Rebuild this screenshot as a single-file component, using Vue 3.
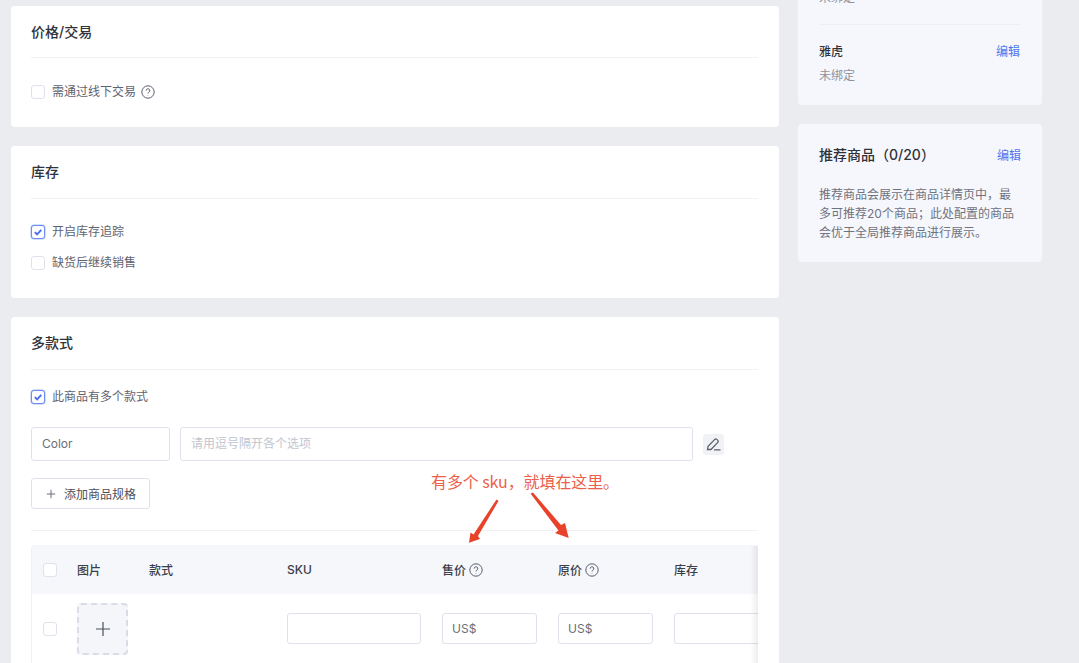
<script setup>
const columns = [
  { label: '图片' },
  { label: '款式' },
  { label: 'SKU' },
  { label: '售价', help: true },
  { label: '原价', help: true },
  { label: '库存' },
]
</script>

<template>
  <div class="page">
    <div class="main">
      <section class="card card-price">
        <h2 class="card-title">价格/交易</h2>
        <div class="card-body">
          <label class="check">
            <span class="box"></span>需通过线下交易
            <svg class="help" viewBox="0 0 14 14"><circle cx="7" cy="7" r="6.2" /><path d="M5.2 5.6a1.8 1.8 0 1 1 2.7 1.5c-.6.4-.9.7-.9 1.4M7 10v.4" /></svg>
          </label>
        </div>
      </section>

      <section class="card card-stock">
        <h2 class="card-title">库存</h2>
        <div class="card-body stack">
          <label class="check">
            <span class="box on"><svg viewBox="0 0 12 12"><path d="M2.800 6.100l2.300 2.200 4.200-4.500" /></svg></span>开启库存追踪
          </label>
          <label class="check"><span class="box"></span>缺货后继续销售</label>
        </div>
      </section>

      <section class="card card-variant">
        <h2 class="card-title">多款式</h2>
        <div class="variant-body">
          <label class="check">
            <span class="box on"><svg viewBox="0 0 12 12"><path d="M2.800 6.100l2.300 2.200 4.200-4.500" /></svg></span>此商品有多个款式
          </label>

          <div class="option-row">
            <div class="input option-name">Color</div>
            <div class="input option-values">请用逗号隔开各个选项</div>
            <span class="edit-btn">
              <svg viewBox="0 0 21 21"><path d="M4.500 15.500l.6-3.300 6.700-6.800a1.400 1.400 0 0 1 2 0l1 1a1.400 1.400 0 0 1 0 2l-6.800 7.100zM11 15.800h6.500" /></svg>
            </span>
          </div>

          <button class="add-btn">
            <svg viewBox="0 0 12 12"><path d="M6 1v10M1 6h10" /></svg>添加商品规格
          </button>

          <div class="table">
            <div class="t-row t-head">
              <div class="t-cell"><span class="box"></span></div>
              <div v-for="col in columns" :key="col.label" class="t-cell">
                {{ col.label }}
                <svg v-if="col.help" class="help" viewBox="0 0 14 14"><circle cx="7" cy="7" r="6.2" /><path d="M5.2 5.6a1.8 1.8 0 1 1 2.700 1.500c-.6.4-.9.7-.9 1.400M7 10v.4" /></svg>
              </div>
            </div>
            <div class="t-row t-line">
              <div class="t-cell"><span class="box"></span></div>
              <div class="t-cell">
                <span class="upload"><svg viewBox="0 0 16 16"><path d="M8 1v14M1 8h14" /></svg></span>
              </div>
              <div class="t-cell"></div>
              <div class="t-cell"><div class="input cell-input w-sku"></div></div>
              <div class="t-cell"><div class="input cell-input w-price">US$</div></div>
              <div class="t-cell"><div class="input cell-input w-price">US$</div></div>
              <div class="t-cell"><div class="input cell-input w-stock"></div></div>
            </div>
            <div class="table-shadow"></div>
          </div>
        </div>
      </section>
    </div>

    <aside class="side">
      <section class="side-card side-bind">
        <div class="bind-item first">
          <div class="bind-head"><span>谷歌</span><a>编辑</a></div>
          <div class="bind-state">未绑定</div>
        </div>
        <div class="bind-item">
          <div class="bind-head"><span>雅虎</span><a>编辑</a></div>
          <div class="bind-state">未绑定</div>
        </div>
      </section>

      <section class="side-card side-rec">
        <div class="rec-head"><span>推荐商品（0/20）</span><a>编辑</a></div>
        <p class="rec-text">推荐商品会展示在商品详情页中，最多可推荐20个商品；此处配置的商品会优于全局推荐商品进行展示。</p>
      </section>
    </aside>

    <div class="note">有多个 sku，就填在这里。</div>
    <svg class="note-arrows" viewBox="0 0 1079 663">
      <path d="M496.500 499.500L498.500 501L478 536L480 539L469 542.800L470.500 532.500L473.500 534.500Z" />
      <path d="M530.500 493.500L533 492.500L561 525L565 523L568.700 538L555 533L558.500 530.500Z" />
    </svg>
  </div>
</template>

<style>
html, body {
  margin: 0;
  background: #ebecf0;
}
</style>

<style scoped>
.page {
  position: relative;
  display: flex;
  gap: 19px;
  width: 1079px;
  height: 663px;
  box-sizing: border-box;
  padding: 6px 0 0 11px;
  overflow: hidden;
  background: #ebecf0;
  font-family: Inter, "Noto Sans CJK SC", sans-serif;
  font-size: 12px;
  color: #3b3f4a;
}

.main {
  display: flex;
  flex-direction: column;
  gap: 19px;
  width: 768px;
  flex: none;
}

.card {
  box-sizing: border-box;
  padding: 0 21px 0 20px;
  background: #fff;
  border-radius: 4px;
  flex: none;
}

.card-price { height: 121px; }
.card-stock { height: 152px; }
.card-variant { height: 400px; }

.card-title {
  margin: 0;
  height: 51px;
  line-height: 52px;
  border-bottom: 1px solid #f0f1f4;
  font-size: 14px;
  font-weight: 500;
  color: #2f323a;
}

.card-stock .card-title,
.card-variant .card-title {
  height: 52px;
}

.card-body {
  padding-top: 27px;
}

.card-stock .card-body {
  padding-top: 26px;
}

.stack {
  display: flex;
  flex-direction: column;
  gap: 17px;
}

.check {
  display: flex;
  align-items: center;
  height: 14px;
  line-height: 14px;
  color: #5f636f;
}

.box {
  display: inline-block;
  flex: none;
  box-sizing: border-box;
  width: 14px;
  height: 14px;
  margin-right: 7px;
  background: #fff;
  border: 1px solid #dfe1ec;
  border-radius: 3px;
}

.box.on {
  border-color: #6d8df3;
  box-shadow: 0 0 0 0.5px #a9bcf8;
}

.box svg {
  display: block;
  width: 12px;
  height: 12px;
  fill: none;
  stroke: #4a6ff0;
  stroke-width: 1.9;
}

.help {
  flex: none;
  width: 14px;
  height: 14px;
  margin-left: 5px;
  fill: none;
  stroke: #5b5f6b;
  stroke-width: 1;
}

.t-cell .help {
  margin-left: 3px;
}

.variant-body {
  padding-top: 20px;
}

.input {
  box-sizing: border-box;
  background: #fff;
  border: 1px solid #dfe1ec;
  border-radius: 3px;
  font-size: 12px;
  color: #6b6f7a;
}

.option-row {
  display: flex;
  align-items: center;
  margin-top: 23px;
}

.option-name,
.option-values {
  height: 34px;
  line-height: 32px;
  padding-left: 10px;
}

.option-name {
  width: 139px;
}

.option-values {
  width: 513px;
  margin-left: 10px;
  color: #c2c5cf;
}

.edit-btn {
  width: 21px;
  height: 21px;
  margin-left: 10px;
  background: #f1f2f6;
  border-radius: 3px;
}

.edit-btn svg {
  display: block;
  width: 21px;
  height: 21px;
  fill: none;
  stroke: #5d616d;
  stroke-width: 1.3;
}

.add-btn {
  display: flex;
  align-items: center;
  box-sizing: border-box;
  width: 119px;
  height: 31px;
  margin-top: 17px;
  padding: 0 0 0 14px;
  background: #fff;
  border: 1px solid #dfe1ec;
  border-radius: 3px;
  font: inherit;
  color: #4b4f5a;
}

.add-btn svg {
  width: 10px;
  height: 10px;
  margin-right: 8px;
  fill: none;
  stroke: #6b6f7a;
  stroke-width: 1.2;
}

.table {
  position: relative;
  width: 727px;
  margin-top: 21px;
  padding-top: 14px;
  overflow: hidden;
  border-top: 1px solid #f0f1f4;
}

.t-row {
  display: grid;
  grid-template-columns: 46px 72px 138px 155px 116px 116px 200px;
  align-items: center;
  box-sizing: border-box;
  border-left: 1px solid #f0f1f4;
  margin-right: -60px;
}

.t-head {
  height: 49px;
  background: #f6f7fb;
  border-radius: 4px 0 0 0;
  font-weight: 500;
  color: #3b3f4a;
}

.t-line {
  height: 69px;
}

.t-cell {
  display: flex;
  align-items: center;
  margin-left: -1px;
}

.t-cell:first-child {
  padding-left: 12px;
}

.t-cell .box {
  margin-right: 0;
}

.upload {
  display: flex;
  align-items: center;
  justify-content: center;
  box-sizing: border-box;
  width: 51px;
  height: 52px;
  background: #f5f6fa;
  border: 2px dashed #d9dbe6;
  border-radius: 4px;
}

.upload svg {
  width: 16px;
  height: 16px;
  fill: none;
  stroke: #4b4f5a;
  stroke-width: 1.2;
}

.cell-input {
  height: 31px;
  line-height: 29px;
  padding-left: 9px;
}

.w-sku { width: 134px; }
.w-price { width: 95px; }
.w-stock { width: 120px; }

.table-shadow {
  position: absolute;
  top: 15px;
  right: 0;
  bottom: 0;
  width: 8px;
  background: linear-gradient(to right, rgba(0, 0, 0, 0), rgba(0, 0, 0, 0.07));
}

.side {
  display: flex;
  flex-direction: column;
  gap: 19px;
  width: 244px;
  flex: none;
  margin-top: -60px;
}

.side-card {
  box-sizing: border-box;
  padding: 0 21px;
  background: #f6f7fc;
  border-radius: 4px;
}

.side-bind {
  height: 159px;
}

.bind-item {
  height: 80px;
  padding-top: 18px;
  box-sizing: border-box;
}

.bind-item.first {
  height: 79px;
  padding-top: 0;
  border-bottom: 1px solid #eff0f4;
}

.bind-head,
.rec-head {
  display: flex;
  justify-content: space-between;
  align-items: center;
  font-weight: 500;
  color: #2f323a;
}

.bind-head a,
.rec-head a {
  font-weight: 400;
  color: #4f74f0;
}

.bind-head a {
  margin-right: 1px;
}

.bind-head {
  height: 18px;
  line-height: 18px;
}

.bind-state {
  margin-top: 6px;
  line-height: 18px;
  color: #8f939e;
}

.first .bind-head {
  height: 37px;
  visibility: hidden;
}

.side-rec {
  height: 138px;
  padding-top: 20px;
}

.rec-head {
  height: 20px;
  font-size: 14px;
}

.rec-head a {
  font-size: 12px;
}

.rec-text {
  margin: 21px 0 0;
  line-height: 19px;
  color: #6f737f;
}

.note {
  position: absolute;
  left: 431px;
  top: 470px;
  font-family: "Noto Sans CJK SC", sans-serif;
  font-size: 16px;
  line-height: 22px;
  letter-spacing: -0.1px;
  white-space: nowrap;
  color: #ec6049;
}

.note-arrows {
  position: absolute;
  left: 0;
  top: 0;
  width: 1079px;
  height: 663px;
  fill: #e8432a;
  pointer-events: none;
}
</style>
